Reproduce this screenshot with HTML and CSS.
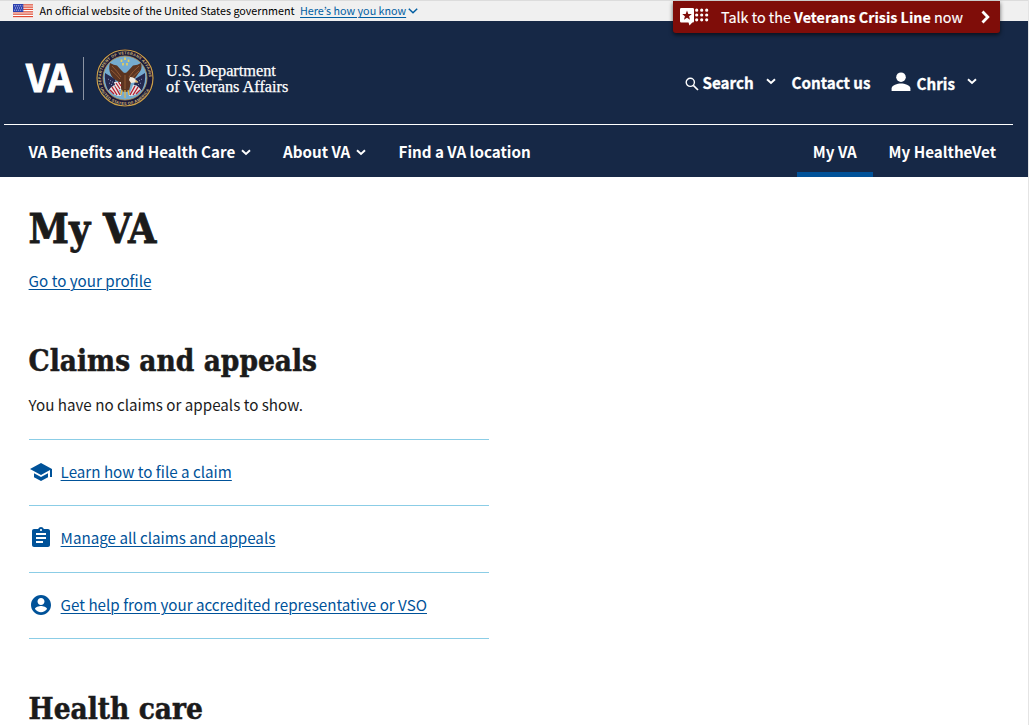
FILE: index.html
```
<!DOCTYPE html>
<html lang="en">
<head>
<meta charset="utf-8">
<title>My VA | Veterans Affairs</title>
<link rel="stylesheet" href="styles.css">
</head>
<body>
<div class="page">
  <div class="gov-banner">
    <svg class="flag" viewBox="0 0 20 14" width="20" height="14" aria-hidden="true">
      <rect width="20" height="14" fill="#fff"/>
      <path d="M0 .75h20M0 3.1h20M0 5.45h20M0 7.8h20M0 10.15h20M0 12.5h20" stroke="#dd4b35" stroke-width="1.25"/>
      <rect width="10.3" height="8" fill="#2b3fae"/>
      <path d="M1.2 1.8h8.400M2 4h7M1.200 6.200h8.400" stroke="#c9d0f2" stroke-width="1" stroke-dasharray="1 1"/>
    </svg>
    <span class="gov-text">An official website of the United States government</span>
    <a class="gov-link" href="#">Here’s how you know<svg class="gov-chev" viewBox="0 0 10 6" width="10" height="6"><path d="M.8.8 5 4.700 9.200.8" fill="none" stroke="currentColor" stroke-width="1.500"/></svg></a>
    <a class="crisis" href="#">
      <svg class="crisis-icon" viewBox="0 0 29 18" width="29" height="18" aria-hidden="true">
        <path d="M1.200 0H12.800Q14 0 14 1.200V13.300Q14 14.500 12.800 14.500H12.300L9.500 17.500 8.500 14.500H1.200Q0 14.500 0 13.300V1.200Q0 0 1.200 0Z" fill="#fff"/>
        <path d="M7 2.500 8.300 5.900 11.800 6.100 9.100 8.300 10 11.700 7 9.800 4 11.700 4.900 8.300 2.200 6.100 5.700 5.900Z" fill="#7f0d09"/>
        <path d="M16.700 2.200h11M16.700 7h11M16.700 11.800h11" stroke="#fff" stroke-width="3.200" stroke-linecap="round" stroke-dasharray="0 5"/>
      </svg>
      <span class="crisis-text">Talk to the <b>Veterans Crisis Line</b> now</span>
      <svg class="crisis-chev" viewBox="0 0 9 14" width="9" height="14"><path d="M1.500 1.500 6.800 7 1.500 12.500" fill="none" stroke="#fff" stroke-width="2.800"/></svg>
    </a>
  </div>

  <header class="header">
    <div class="masthead">
      <a class="logo" href="#">
        <span class="logo-va">VA</span>
        <span class="logo-rule"></span>
        <svg class="seal" viewBox="-30 -30 60 60" width="60" height="60" aria-hidden="true">
          <defs>
            <path id="arcTop" d="M-22.700 8A24 24 0 1 1 22.700 8"/>
            <path id="arcBottom" d="M-25.300 9A26.800 26.800 0 0 0 25.300 9"/>
            <clipPath id="field"><circle r="21.500"/></clipPath>
          </defs>
          <circle r="29" fill="#161433"/>
          <circle r="28" fill="#1b1a3c" stroke="#c9a24a" stroke-width="1.200"/>
          <circle r="22" fill="#75abd0" stroke="#b69752" stroke-width=".8"/>
          <text class="seal-text"><textPath href="#arcTop" textLength="81" startOffset="1">DEPARTMENT OF VETERANS AFFAIRS</textPath></text>
          <text class="seal-text"><textPath href="#arcBottom" textLength="62" startOffset="1">UNITED STATES OF AMERICA</textPath></text>
          <g clip-path="url(#field)">
            <path d="M-20-5-10 1-8 14-17 12Q-21 4-20-5ZM20-5 10 1 8 14 17 12Q21 4 20-5Z" fill="#25294f"/>
            <path d="M-17 1-11 5M-16 5-11 8M17 1 11 5M16 5 11 8" stroke="#8e9bc6" stroke-width="1" stroke-dasharray="1 1.500"/>
            <path d="M-16 12Q-13 7-8 7L-4 18Q-11 18-16 12ZM16 12Q13 7 8 7L4 18Q11 18 16 12Z" fill="#e9e5e4"/>
            <path d="M-13 9-8 17M-10 8-5 17M13 9 8 17M10 8 5 17M-15 12-11 16M15 12 11 16" stroke="#b32033" stroke-width="1.400"/>
          </g>
          <path d="M0-20.500v2.500M-3.500-18.500v2.500M3.500-18.500v2.500M-2-15v2.500M2-15v2.500" stroke="#e8cf5a" stroke-width="1.700"/>
          <path d="M-15-15Q-11-13-8-12.500L-3-7Q0-3 3-7L8-12.500Q13-13 16-15 18-9 13-4 9 2 6 4L4 13Q0 15-3 13L-6 4Q-12 1-14-3-17-9-15-15Z" fill="#5b3421"/>
          <path d="M-13-12Q-8-7-4-1M-14-8Q-9-4-5 1M14-12Q8-7 4-1M14-7Q9-3 5 2M0-3v14" stroke="#925a35" stroke-width="1" fill="none"/>
          <path d="M5-1Q9-1 11 2L13 4 10 4.500 6 5 4 2Z" fill="#f1e9df"/>
          <path d="M10.500 2 13.500 4.500 10.500 4.500Z" fill="#e3b64a"/>
          <path d="M-11 4-4 4-4 12Q-9 12-11 4Z" fill="#efe9e6"/>
          <path d="M-9 5-5 11M-6.500 4-4 8" stroke="#b32033" stroke-width="1.200"/>
          <path d="M-3 12-4 17M0 12 0 20M3 12 4 17" stroke="#e3b64a" stroke-width="1.300"/>
        </svg>
        <span class="logo-name"><span class="name-a">U.S. Department</span><span class="name-b">of Veterans Affairs</span></span>
      </a>
      <div class="tools">
        <a class="tool search" href="#">
          <svg class="magnifier" viewBox="0 0 14 14" width="14" height="14"><circle cx="5.300" cy="5.300" r="4.100" fill="none" stroke="#fff" stroke-width="1.400"/><path d="M8.300 8.300 13 13" stroke="#fff" stroke-width="1.700"/></svg>
          <span>Search</span>
          <svg class="chev" viewBox="0 0 10 7" width="10" height="7"><path d="M1 1.200 5 5 9 1.200"/></svg>
        </a>
        <a class="tool contact" href="#">Contact us</a>
        <a class="tool user" href="#">
          <svg viewBox="0 0 20 20" width="20" height="20"><circle cx="10" cy="5.200" r="4.800" fill="#fff"/><path d="M.6 19V16.500C.6 13.300 6.500 11.500 10 11.500S19.400 13.300 19.400 16.500V19Z" fill="#fff"/></svg>
          <span class="user-name">Chris</span>
          <svg class="chev" viewBox="0 0 10 7" width="10" height="7"><path d="M1 1.200 5 5 9 1.200"/></svg>
        </a>
      </div>
    </div>
    <nav class="nav">
      <a class="nav-item benefits" href="#">VA Benefits and Health Care<svg class="chev" viewBox="0 0 10 7" width="10" height="7"><path d="M1 1.200 5 5 9 1.200"/></svg></a>
      <a class="nav-item about" href="#">About VA<svg class="chev" viewBox="0 0 10 7" width="10" height="7"><path d="M1 1.200 5 5 9 1.200"/></svg></a>
      <a class="nav-item" href="#">Find a VA location</a>
      <a class="nav-item tab current" href="#">My VA</a>
      <a class="nav-item tab" href="#">My HealtheVet</a>
    </nav>
  </header>

  <main class="main">
    <h1>My VA</h1>
    <p class="profile"><a href="#">Go to your profile</a></p>
    <h2>Claims and appeals</h2>
    <p class="empty">You have no claims or appeals to show.</p>
    <ul class="links">
      <li><svg viewBox="0 0 24 24" width="24" height="24"><path d="M5 13.180v4L12 21l7-3.820v-4L12 17l-7-3.820zM12 3 1 9l11 6 9-4.910V17h2V9L12 3z"/></svg><a href="#">Learn how to file a claim</a></li>
      <li><svg viewBox="0 0 24 24" width="24" height="24"><path d="M19 3h-4.180C14.400 1.840 13.300 1 12 1c-1.300 0-2.400.84-2.820 2H5c-1.100 0-2 .9-2 2v14c0 1.100.9 2 2 2h14c1.100 0 2-.9 2-2V5c0-1.100-.9-2-2-2zm-7 0c.55 0 1 .45 1 1s-.45 1-1 1-1-.45-1-1 .45-1 1-1zm2 14H7v-2h7v2zm3-4H7v-2h10v2zm0-4H7V7h10v2z"/></svg><a href="#">Manage all claims and appeals</a></li>
      <li><svg viewBox="0 0 24 24" width="24" height="24"><path d="M12 2C6.480 2 2 6.480 2 12s4.480 10 10 10 10-4.480 10-10S17.520 2 12 2zm0 3c1.930 0 3.500 1.570 3.500 3.500S13.930 12 12 12 8.500 10.430 8.500 8.500 10.070 5 12 5zm0 14.200c-2.500 0-4.710-1.280-6-3.220.03-1.990 4-3.080 6-3.080 1.990 0 5.970 1.090 6 3.080-1.290 1.940-3.500 3.220-6 3.220z"/></svg><a href="#">Get help from your accredited representative or VSO</a></li>
    </ul>
    <h2 class="health">Health care</h2>
  </main>
</div>
</body>
</html>
```
FILE: styles.css
```
* { box-sizing: border-box; }
html, body { margin: 0; height: 725px; overflow: hidden; background: #fff; }
body {
  font: 400 15.18px/24px "Noto Sans CJK KR", "Noto Sans", sans-serif;
  color: #1b1b1b;
}
a { color: #005299; text-underline-offset: 1.5px; text-decoration-thickness: 1px; }
h1, h2, p, ul { margin: 0; padding: 0; }
svg { display: block; flex: none; }

.page { width: 1029px; height: 725px; border-right: 1px solid #e4e4e4; overflow: hidden; }

.gov-banner {
  position: relative;
  display: flex;
  align-items: center;
  height: 21px;
  padding-left: 13px;
  border-top: 1px solid #dcdcdc;
  background: #f0f0f0;
  color: #000;
  font-size: 10.75px;
  line-height: 20px;
  white-space: nowrap;
}
.gov-text { margin: 0 5.500px 0 6.500px; }
.gov-link { display: flex; align-items: center; color: #005ea2; }
.gov-chev { margin-left: 2px; }

.crisis {
  position: absolute;
  top: 0;
  left: 673px;
  z-index: 2;
  display: flex;
  align-items: center;
  width: 327px;
  height: 32px;
  padding-left: 7px;
  border-radius: 0 0 3px 3px;
  background: #7f0d09;
  box-shadow: 0 2px 4px rgba(0, 0, 0, .6);
  color: #fff;
  font-size: 14.350px;
  line-height: 32px;
  text-decoration: none;
  -webkit-text-stroke: .15px #fff;
}
.crisis-text { margin-left: 12px; width: 242px; }
.crisis-chev { margin-left: 18px; }

.header { height: 156px; background: #162846; }
.header a { color: #fff; text-decoration: none; }
.masthead {
  display: flex;
  justify-content: space-between;
  height: 104px;
  margin: 0 15px 0 4px;
  border-bottom: 1px solid #fff;
}
.logo { display: flex; align-items: center; height: 60px; margin: 27px 0 0 21px; }
.logo-va {
  width: 58px;
  padding: 0 0 4px 1px;
  font-size: 38px;
  font-weight: 700;
  letter-spacing: -1px;
  line-height: 56px;
  -webkit-text-stroke: 1px #fff;
}
.logo-rule { width: 1px; height: 43px; background: #8b94a3; }
.seal { margin: 0 11px 0 11px; }
.seal-text { fill: #d3b977; font: 700 3.900px "Liberation Sans", sans-serif; }
.logo-name {
  display: flex;
  flex-direction: column;
  padding-top: 2px;
  color: #fff;
  font: 400 16.300px/16px "Liberation Serif", serif;
  -webkit-text-stroke: .25px #fff;
  white-space: nowrap;
}
.tools { display: flex; align-items: flex-start; padding-top: 49px; font-weight: 700; white-space: nowrap; }
.tool { display: flex; align-items: center; height: 24px; -webkit-text-stroke: .3px #fff; }
.tool .chev { margin-bottom: 1px; }
.magnifier { margin-top: 3px; }
.search { width: 107.500px; padding-left: .5px; }
.search span { width: 63.500px; margin-left: 4px; }
.search span, .contact { padding-bottom: 1px; }
.contact { width: 99.500px; }
.user { width: 122px; }
.user-name { width: 50px; margin-left: 5.500px; padding-top: 1px; }
.chev path { fill: none; stroke: #fff; stroke-width: 1.900; }

.nav { display: flex; height: 52px; padding: 0 16px 0 28.500px; font-weight: 700; white-space: nowrap; }
.nav-item { display: flex; align-items: center; height: 52px; }
.nav-item .chev { margin: 2px 0 0 6px; }
.benefits { width: 254.500px; }
.about { width: 115.500px; }
.tab { padding: 0 15.900px; }
.current { margin-left: auto; border-bottom: 5px solid #005299; padding-top: 5px; }

.main { padding: 28px 28.600px 0; }
h1, h2 {
  color: #1b1b1b;
  font-family: "DejaVu Serif Condensed", "DejaVu Serif", serif;
  font-weight: 700;
}
h1 { font-size: 40.600px; line-height: 48px; -webkit-text-stroke: .8px #1b1b1b; }
h2 { margin-top: 50px; font-size: 29.500px; line-height: 38px; -webkit-text-stroke: .5px #1b1b1b; }
.profile { margin-top: 15px; }
.empty { margin-top: 12px; }
.links { width: 460px; margin-top: 23px; border-top: 1px solid #8bcde6; list-style: none; }
.links li {
  display: flex;
  gap: 8px;
  height: 66px;
  padding-top: 20px;
  border-bottom: 1px solid #8bcde6;
}
.links li:nth-child(2) { height: 67px; }
.links a { line-height: 22px; }
.links svg { fill: #005299; }
.health { margin-top: 51px; }
```
